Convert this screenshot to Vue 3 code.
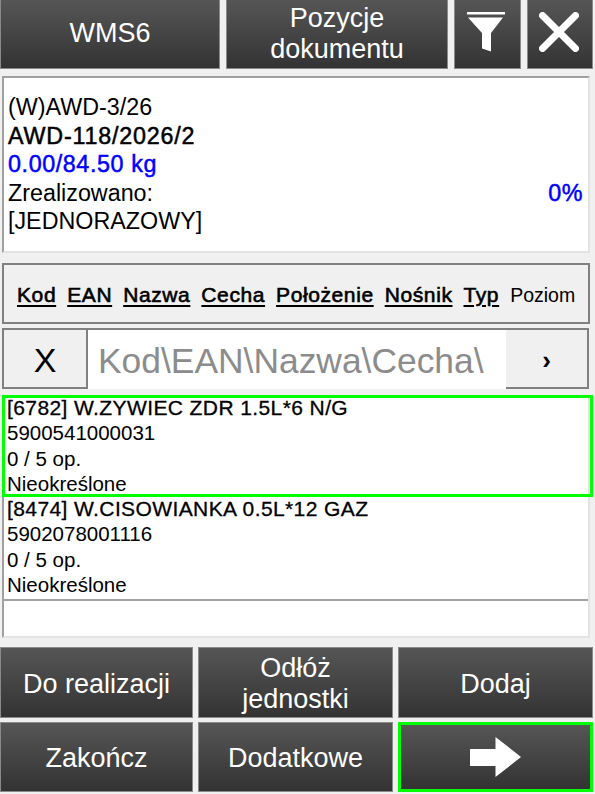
<script setup>
const items = [
  { id: 1, title: '[6782] W.ZYWIEC ZDR 1.5L*6 N/G', ean: '5900541000031', qty: '0 / 5 op.', state: 'Nieokreślone', active: true },
  { id: 2, title: '[8474] W.CISOWIANKA 0.5L*12 GAZ', ean: '5902078001116', qty: '0 / 5 op.', state: 'Nieokreślone', active: false }
]

const filters = ['Kod', 'EAN', 'Nazwa', 'Cecha', 'Położenie', 'Nośnik', 'Typ']
</script>

<template>
  <div class="page">
    <div class="top">
      <button class="btn">WMS6</button>
      <button class="btn">Pozycje<br />dokumentu</button>
      <button class="btn icon-btn">
        <svg width="38" height="40" viewBox="0 0 38 40">
          <rect x="0" y="0" width="38" height="2.5" fill="#fff" />
          <path d="M1 5.5H36L24 21V39.5L15 36.5V21Z" fill="#fff" />
        </svg>
      </button>
      <button class="btn icon-btn">
        <svg width="40" height="40" viewBox="0 0 40 40">
          <path d="M3.5 3.5L36.5 36.5M36.5 3.5L3.5 36.5" stroke="#fff" stroke-width="7" stroke-linecap="round" />
        </svg>
      </button>
    </div>

    <div class="info inset">
      <div>(W)AWD-3/26</div>
      <div class="strong">AWD-118/2026/2</div>
      <div class="strong blue narrow">0.00/84.50 kg</div>
      <div class="row">
        <span>Zrealizowano:</span>
        <span class="strong blue narrow">0%</span>
      </div>
      <div>[JEDNORAZOWY]</div>
    </div>

    <div class="filters inset">
      <span v-for="f in filters" :key="f" class="filter">{{ f }}</span>
      <span class="poziom">Poziom</span>
    </div>

    <div class="search">
      <button class="light clear">X</button>
      <div class="field">Kod\EAN\Nazwa\Cecha\</div>
      <button class="light next">›</button>
    </div>

    <div class="list inset">
      <div v-for="item in items" :key="item.id" class="item" :class="{ active: item.active }">
        <div class="title">{{ item.title }}</div>
        <div>{{ item.ean }}</div>
        <div>{{ item.qty }}</div>
        <div>{{ item.state }}</div>
      </div>
      <div class="sep"></div>
    </div>

    <div class="bottom">
      <button class="btn">Do realizacji</button>
      <button class="btn">Odłóż<br />jednostki</button>
      <button class="btn">Dodaj</button>
      <button class="btn">Zakończ</button>
      <button class="btn">Dodatkowe</button>
      <button class="btn selected">
        <svg width="51" height="40" viewBox="0 0 51 40">
          <path d="M0 12H25.5V0L51 20L25.5 40V29H0Z" fill="#fff" />
        </svg>
      </button>
    </div>
  </div>
</template>

<style scoped>
.page {
  width: 595px;
  height: 794px;
  background: #f0f0f0;
  font-family: "Liberation Sans", Arial, sans-serif;
  color: #000;
  display: flex;
  flex-direction: column;
  overflow: hidden;
}

button {
  font-family: inherit;
  padding: 0;
  margin: 0;
}

.btn {
  box-sizing: border-box;
  background: linear-gradient(#565656, #333333);
  border: 1px solid #8a8a8a;
  color: #fff;
  font-size: 27px;
  line-height: 31px;
  display: flex;
  align-items: center;
  justify-content: center;
  text-align: center;
}

.top {
  height: 69px;
  display: grid;
  grid-template-columns: 220px 222px 67px 66px;
  column-gap: 6px;
  flex: none;
}

.top .btn {
  border-top: none;
  padding-bottom: 1px;
}

.top .icon-btn {
  padding-right: 3px;
  padding-bottom: 4px;
}

.inset {
  box-sizing: border-box;
  border: 2px solid;
  border-color: #a0a0a0 #e3e3e3 #e3e3e3 #a0a0a0;
  margin: 0 5px 0 2px;
}

.info {
  margin-top: 7px;
  height: 177px;
  background: #fff;
  padding: 15px 5px 0 4px;
  font-size: 23.3px;
  line-height: 28.6px;
  flex: none;
}

.strong {
  -webkit-text-stroke: 0.5px currentColor;
  letter-spacing: 0.8px;
}

.narrow {
  letter-spacing: 0.6px;
}

.blue {
  color: #0000ff;
}

.row {
  display: flex;
  justify-content: space-between;
}

.filters {
  margin-top: 10px;
  height: 61px;
  flex: none;
  display: flex;
  align-items: center;
  padding: 3px 0 0 13px;
  border-color: #808080;
  font-size: 21px;
}

.filter {
  -webkit-text-stroke: 0.6px #000;
  letter-spacing: 0.6px;
  text-decoration: underline;
  text-decoration-thickness: 1.5px;
  text-underline-offset: 3px;
  margin-right: 11px;
}

.poziom {
  font-size: 19.5px;
}

.search {
  margin: 4px 6px 0 2px;
  height: 61px;
  flex: none;
  display: grid;
  grid-template-columns: 84px 1fr 83px;
  border-top: 2px solid #808080;
  border-left: 2px solid #808080;
  box-sizing: border-box;
  background: #fff;
}

.light {
  background: #f0f0f0;
  border: none;
  border-right: 2px solid #808080;
  border-bottom: 2px solid #808080;
  color: #000;
  padding-top: 3px;
}

.clear {
  font-size: 34px;
}

.next {
  font-size: 26px;
  font-weight: bold;
}

.field {
  font-size: 35.4px;
  color: #8c8c8c;
  display: flex;
  align-items: center;
  padding: 3px 0 0 10px;
  white-space: nowrap;
  overflow: hidden;
}

.list {
  margin-top: 6px;
  height: 243px;
  flex: none;
  background: #fff;
  font-size: 20.5px;
  line-height: 25.3px;
  position: relative;
}

.item {
  box-sizing: border-box;
  height: 102px;
  padding-left: 3px;
  white-space: nowrap;
}

.item.active {
  position: relative;
  margin: -2px -5px -1px -2px;
  padding-left: 5px;
  outline: 3px solid #00ff00;
  outline-offset: -3px;
}

.title {
  font-size: 21px;
  -webkit-text-stroke: 0.3px #000;
  letter-spacing: 0.4px;
}

.sep {
  border-bottom: 2px solid #a0a0a0;
  margin-top: 1px;
}

.bottom {
  margin-top: 9px;
  width: 593px;
  display: grid;
  grid-template-columns: 193px 195px 195px;
  grid-template-rows: 71px 70px;
  gap: 4px 5px;
}

.bottom .btn {
  padding-top: 3px;
}

.bottom .selected {
  border: 3px solid #00ff00;
  padding-top: 0;
}
</style>

<style>
html, body {
  margin: 0;
  background: #f0f0f0;
}
</style>
